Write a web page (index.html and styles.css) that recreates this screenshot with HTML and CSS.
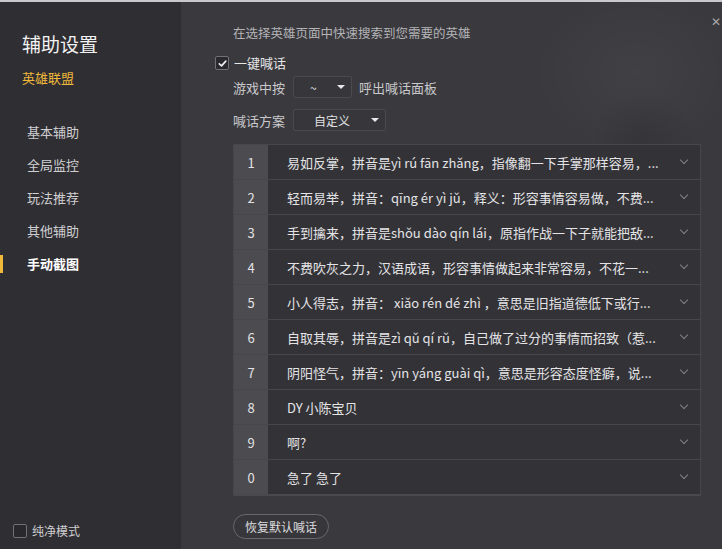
FILE: index.html
```html
<!DOCTYPE html>
<html lang="zh">
<head>
<meta charset="utf-8">
<link rel="stylesheet" href="styles.css">
</head>
<body>
<div class="app">
  <aside class="sidebar">
    <div class="title">辅助设置</div>
    <div class="game">英雄联盟</div>
    <nav class="nav">
      <div class="nav-item">基本辅助</div>
      <div class="nav-item">全局监控</div>
      <div class="nav-item">玩法推荐</div>
      <div class="nav-item">其他辅助</div>
      <div class="nav-item active">手动截图</div>
    </nav>
    <label class="pure">
      <span class="box"></span>
      <span>纯净模式</span>
    </label>
  </aside>
  <main class="main">
    <div class="close">✕</div>
    <div class="hint">在选择英雄页面中快速搜索到您需要的英雄</div>
    <div class="check-row">
      <span class="box checked"><svg viewBox="0 0 12 12" width="11" height="11"><path d="M2.5 6.3 L5 8.6 L9.6 3.4" fill="none" stroke="#eee" stroke-width="1.8" stroke-linecap="round" stroke-linejoin="round"/></svg></span>
      <span>一键喊话</span>
    </div>
    <div class="sub">
      <div class="form-row first">
        <span>游戏中按</span>
        <div class="select small"><span class="val">~</span><span class="caret"></span></div>
        <span>呼出喊话面板</span>
      </div>
      <div class="form-row">
        <span>喊话方案</span>
        <div class="select wide"><span class="val">自定义</span><span class="caret"></span></div>
      </div>
      <div class="table">
        <div class="row"><div class="num">1</div><div class="txt">易如反掌，拼音是yì rú fān zhǎng，指像翻一下手掌那样容易，...</div><div class="chev"></div></div>
        <div class="row"><div class="num">2</div><div class="txt">轻而易举，拼音：qīng ér yì jǔ，释义：形容事情容易做，不费...</div><div class="chev"></div></div>
        <div class="row"><div class="num">3</div><div class="txt">手到擒来，拼音是shǒu dào qín lái，原指作战一下子就能把敌...</div><div class="chev"></div></div>
        <div class="row"><div class="num">4</div><div class="txt">不费吹灰之力，汉语成语，形容事情做起来非常容易，不花一...</div><div class="chev"></div></div>
        <div class="row"><div class="num">5</div><div class="txt">小人得志，拼音： xiǎo rén dé zhì ，意思是旧指道德低下或行...</div><div class="chev"></div></div>
        <div class="row"><div class="num">6</div><div class="txt">自取其辱，拼音是zì qǔ qí rǔ，自己做了过分的事情而招致（惹...</div><div class="chev"></div></div>
        <div class="row"><div class="num">7</div><div class="txt">阴阳怪气，拼音：yīn yáng guài qì，意思是形容态度怪癖，说...</div><div class="chev"></div></div>
        <div class="row"><div class="num">8</div><div class="txt">DY 小陈宝贝</div><div class="chev"></div></div>
        <div class="row"><div class="num">9</div><div class="txt">啊?</div><div class="chev"></div></div>
        <div class="row"><div class="num">0</div><div class="txt">急了 急了</div><div class="chev"></div></div>
      </div>
      <button class="reset">恢复默认喊话</button>
    </div>
  </main>
</div>
</body>
</html>
```
FILE: styles.css
```css
html, body {
  margin: 0;
  padding: 0;
  background: #3a393e;
}
body {
  width: 722px;
  height: 549px;
  overflow: hidden;
  font-family: "Noto Sans CJK SC", "Noto Sans", sans-serif;
  color: #dcdcdc;
}
.app {
  display: flex;
  height: 547px;
  border-top: 2px solid #c9c9cb;
}
.sidebar {
  width: 181px;
  flex: none;
  background: #2f2e33;
  display: flex;
  flex-direction: column;
  padding-top: 29px;
  box-sizing: border-box;
}
.title {
  font-size: 19px;
  line-height: 26px;
  color: #f2f2f2;
  padding-left: 22px;
}
.game {
  font-size: 13px;
  line-height: 18px;
  color: #f0b93a;
  padding-left: 22px;
  margin-top: 12px;
}
.nav {
  margin-top: 28px;
  display: flex;
  flex-direction: column;
}
.nav-item {
  height: 33px;
  display: flex;
  align-items: center;
  padding-left: 27px;
  font-size: 13px;
  color: #cfcfd1;
}
.nav-item.active {
  padding-left: 0;
  color: #ffffff;
  font-weight: bold;
}
.nav-item.active::before {
  content: "";
  width: 3px;
  height: 18px;
  background: #f0b93a;
  margin-right: 24px;
}
.pure {
  margin-top: auto;
  margin-bottom: 10px;
  padding-left: 13px;
  display: flex;
  align-items: center;
  gap: 5px;
  font-size: 12px;
  color: #d0d0d2;
}
.box {
  width: 12px;
  height: 12px;
  border: 1px solid #707075;
  border-radius: 2px;
  background: #29282c;
  display: inline-flex;
  align-items: center;
  justify-content: center;
  flex: none;
}
.main {
  flex: 1;
  position: relative;
  padding: 22px 21px 0 34px;
  box-sizing: border-box;
  background:
    radial-gradient(ellipse 70px 60px at 462px 135px, rgba(0,0,0,0.10), transparent 75%),
    radial-gradient(ellipse 140px 110px at 455px 70px, rgba(255,255,255,0.035), transparent 75%),
    radial-gradient(ellipse 120px 160px at 380px 260px, rgba(255,255,255,0.02), transparent 75%),
    #3a393e;
}
.close {
  position: absolute;
  top: 10px;
  right: 1px;
  font-size: 12px;
  color: #a8a8ab;
}
.hint {
  padding-left: 18px;
  font-size: 12.5px;
  line-height: 18px;
  color: #b4b4b7;
}
.check-row {
  margin-top: 12px;
  display: flex;
  align-items: center;
  gap: 5px;
  font-size: 13px;
  line-height: 18px;
  color: #e6e6e8;
}
.box.checked {
  background: #2a292d;
}
.sub {
  padding-left: 18px;
}
.form-row {
  display: flex;
  align-items: center;
  gap: 7px;
  font-size: 13px;
  color: #c9c9cc;
  margin-top: 11px;
}
.form-row.first {
  margin-top: 4px;
}
.select {
  height: 22px;
  box-sizing: border-box;
  border: 1px solid #4b4a50;
  border-radius: 2px;
  background: #37363b;
  display: flex;
  align-items: center;
  color: #e0e0e2;
}
.select.small {
  width: 59px;
  margin-left: 1px;
}
.select.wide {
  width: 93px;
  margin-left: 1px;
}
.select .val {
  flex: 1;
  font-size: 12px;
}
.select.small .val {
  padding-left: 16px;
}
.select.wide .val {
  padding-left: 20px;
}
.caret {
  width: 0;
  height: 0;
  border-left: 4px solid transparent;
  border-right: 4px solid transparent;
  border-top: 4px solid #e8e8ea;
  margin-right: 6px;
}
.table {
  margin-top: 13px;
  border: 1px solid #47464c;
  border-bottom: 2px solid #4a494e;
  width: 468px;
  box-sizing: border-box;
}
.row {
  display: flex;
  height: 35px;
  border-top: 1px solid #47464c;
  box-sizing: border-box;
  background: #333237;
}
.row:first-child {
  border-top: none;
  height: 34px;
}
.num {
  width: 34px;
  flex: none;
  background: #4c4b50;
  display: flex;
  align-items: center;
  justify-content: center;
  font-size: 13px;
  color: #e2e2e4;
}
.txt {
  flex: 1;
  padding-left: 19px;
  display: flex;
  align-items: center;
  white-space: nowrap;
  overflow: hidden;
  font-size: 13px;
  color: #e4e4e6;
}
.chev {
  width: 32px;
  flex: none;
  display: flex;
  align-items: center;
  justify-content: center;
}
.chev::before {
  content: "";
  width: 5px;
  height: 5px;
  border-right: 1.2px solid #838287;
  border-bottom: 1.2px solid #838287;
  transform: rotate(45deg);
  margin-top: -4px;
}
.reset {
  margin-top: 18px;
  height: 25px;
  padding: 0 11px;
  border: 1px solid #69686d;
  border-radius: 13px;
  background: #37363b;
  color: #dcdcde;
  font-family: "Noto Sans CJK SC", sans-serif;
  font-size: 12px;
  display: flex;
  align-items: center;
}
```
